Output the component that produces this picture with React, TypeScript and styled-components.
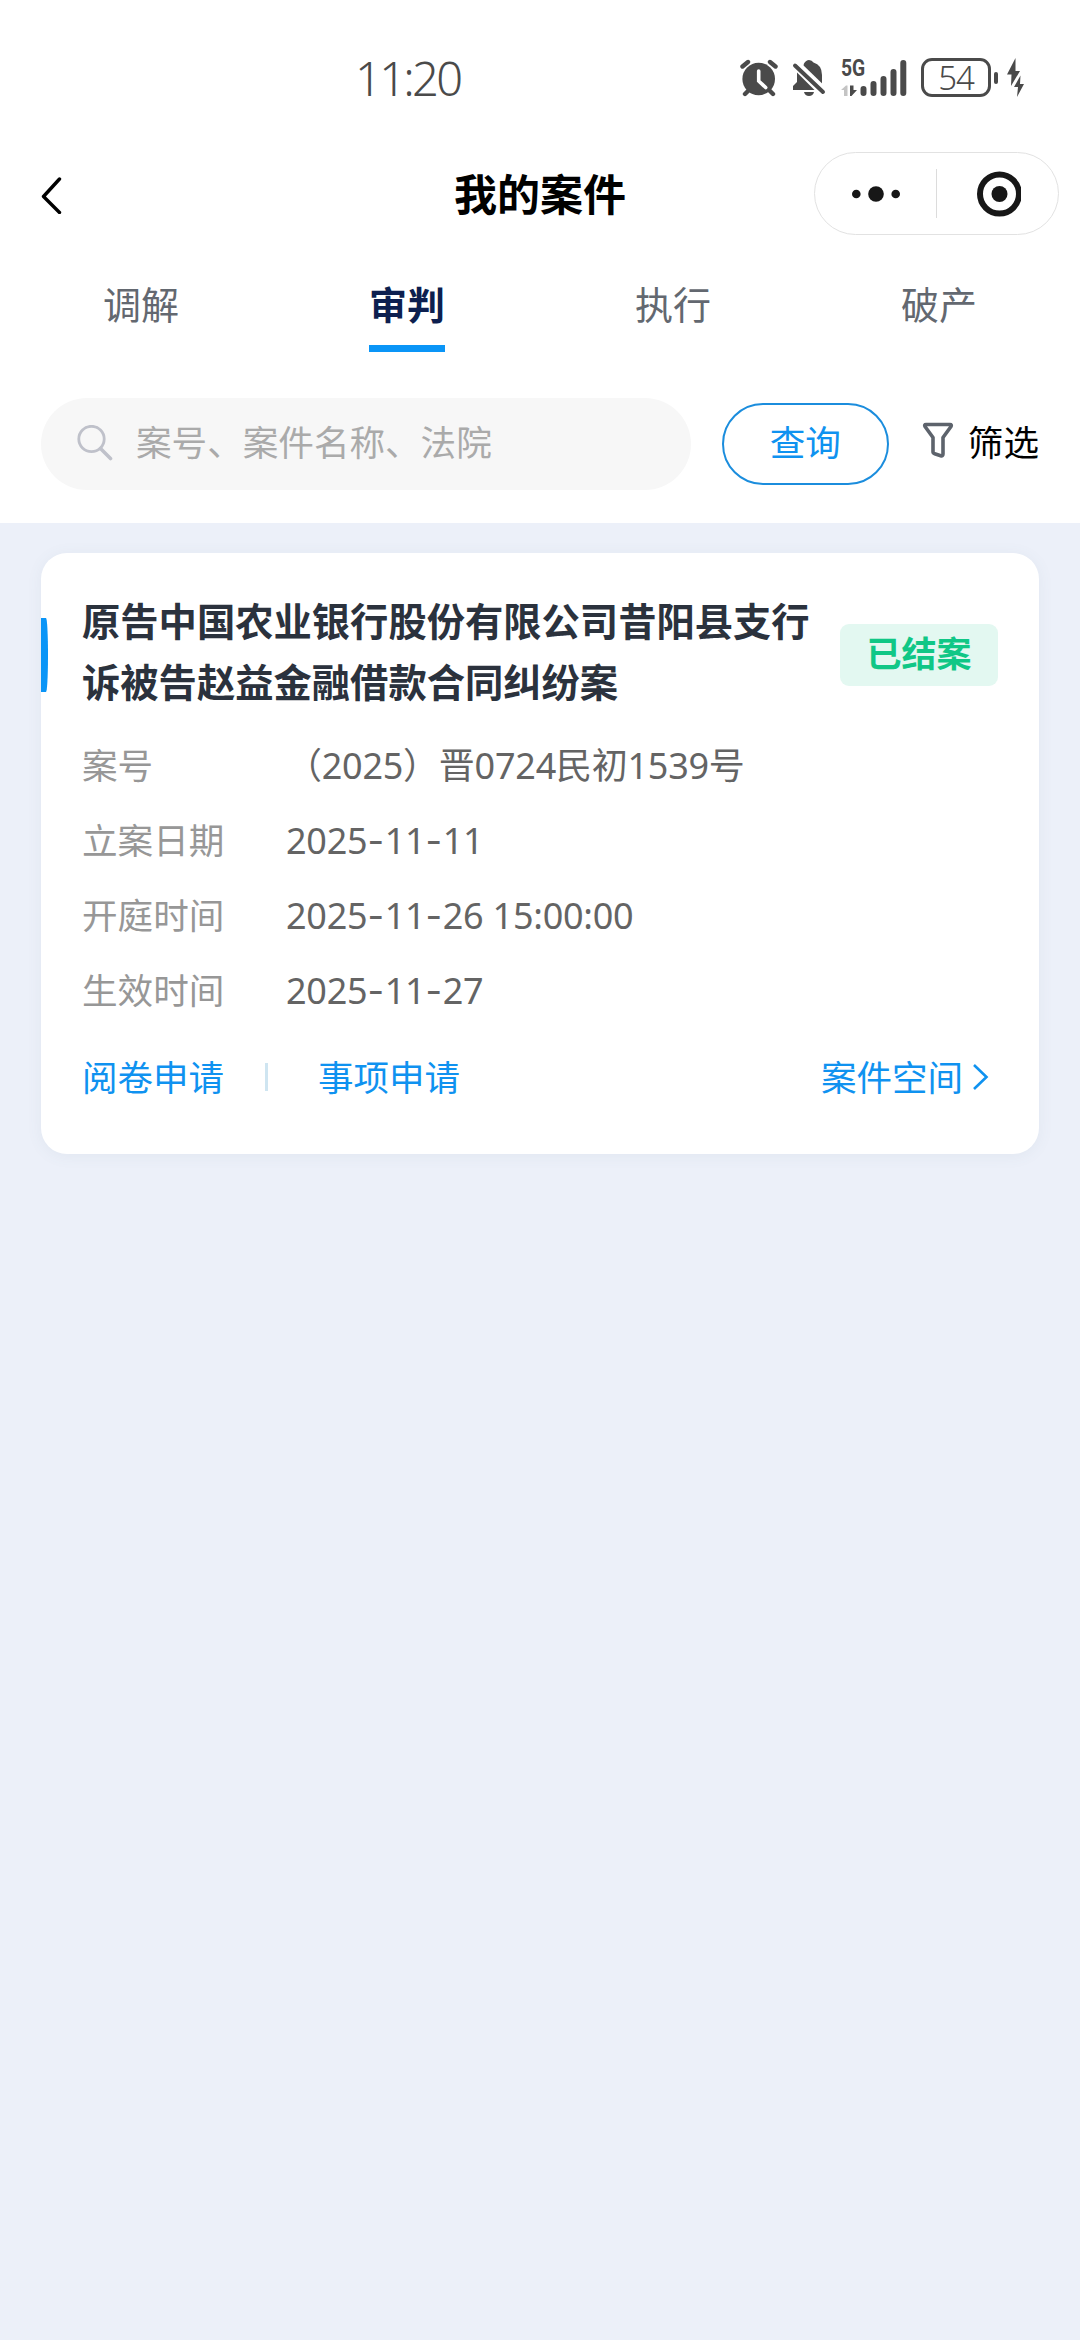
import React from "react";
import styled, { createGlobalStyle } from "styled-components";

const GlobalStyle = createGlobalStyle`
  * { box-sizing: border-box; }
  html, body { margin: 0; padding: 0; background: #ecf0f9; }
  body { font-family: "Noto Sans", "Noto Sans CJK SC", sans-serif; }
  svg { display: block; flex: none; }
`;

const Page = styled.div`
  width: 1080px;
  min-height: 2340px;
  display: flex;
  flex-direction: column;
  background: #ecf0f9;
`;

const Header = styled.header`
  height: 523px;
  background: #fff;
  display: flex;
  flex-direction: column;
`;

const StatusBar = styled.div`
  height: 152px;
  padding: 58px 56px 0 355px;
  display: flex;
  justify-content: space-between;
  align-items: flex-start;
  color: #4a4a4a;
`;

const Clock = styled.span`
  font-size: 47px;
  font-weight: 300;
  line-height: 40px;
  letter-spacing: -2.7px;
`;

const StatusIcons = styled.div`
  display: flex;
  height: 40px;
`;

const Network = styled.div`
  width: 66px;
  height: 40px;
  margin: 0 14px 0 15px;
  position: relative;
`;

const NetworkLabel = styled.span`
  position: absolute;
  left: 0;
  top: 1px;
  font-family: Roboto, sans-serif;
  font-weight: 700;
  font-size: 23px;
  line-height: 20px;
  transform: scaleX(0.84);
  transform-origin: left;
`;

const Battery = styled.div`
  width: 70px;
  height: 39px;
  border: 3px solid #4a4a4a;
  border-radius: 11px;
  font-size: 33px;
  font-weight: 300;
  line-height: 33px;
  letter-spacing: -1px;
  text-align: center;
`;

const BatteryTip = styled.div`
  width: 4px;
  height: 12px;
  margin: 14px 9px 0 3px;
  border-radius: 2px;
  background: #4a4a4a;
`;

const NavBar = styled.div`
  height: 82px;
  padding: 0 21px 0 40px;
  display: grid;
  grid-template-columns: 245px 1fr 245px;
  align-items: center;
`;

const NavTitle = styled.h1`
  margin: 2px 0 0 -19px;
  font-size: 43px;
  font-weight: 700;
  line-height: 60px;
  text-align: center;
  color: #000;
`;

const Capsule = styled.div`
  height: 83px;
  border: 1px solid #e2e2e2;
  border-radius: 42px;
  display: flex;
  align-items: center;
`;

const CapsuleHalf = styled.div`
  flex: 1;
  display: flex;
  justify-content: center;
`;

const CapsuleLine = styled.div`
  width: 1px;
  height: 49px;
  background: #dcdcdc;
`;

const Tabs = styled.nav`
  height: 118px;
  margin-top: 46px;
  padding: 0 8px;
  display: grid;
  grid-template-columns: repeat(4, 1fr);
  justify-items: center;
`;

const Tab = styled.a<{ $active?: boolean }>`
  height: 72px;
  font-size: 38px;
  line-height: 49px;
  font-weight: ${(p) => (p.$active ? 700 : 400)};
  color: ${(p) => (p.$active ? "#0d1f4f" : "#636870")};
  border-bottom: 7px solid ${(p) => (p.$active ? "#0a95f7" : "transparent")};
`;

const SearchRow = styled.div`
  padding: 0 41px;
  height: 92px;
  display: flex;
  align-items: center;
`;

const SearchField = styled.div`
  width: 650px;
  height: 92px;
  padding: 0 0 2px 36px;
  border-radius: 46px;
  background: #f7f7f7;
  display: flex;
  align-items: center;
  gap: 23px;
`;

const Placeholder = styled.span`
  font-size: 35.6px;
  line-height: 50px;
  padding-bottom: 2px;
  color: #aaa;
`;

const QueryButton = styled.button`
  width: 167px;
  height: 82px;
  margin: 0 33px 0 31px;
  padding: 0 0 5px;
  border: 2px solid #1b8ddd;
  border-radius: 41px;
  background: #fff;
  color: #0f92f0;
  font-family: inherit;
  font-size: 35.6px;
  line-height: 50px;
`;

const Filter = styled.div`
  display: flex;
  align-items: center;
  gap: 14px;
  padding-bottom: 5px;
  font-size: 35.6px;
  line-height: 50px;
  color: #000;
  white-space: nowrap;
`;

const Card = styled.article`
  margin: 30px 41px 0;
  height: 601px;
  border-radius: 26px;
  background: #fff;
  box-shadow: 0 2px 16px rgba(90, 110, 130, 0.07);
`;

const CardHead = styled.div`
  padding-top: 38px;
  display: flex;
  align-items: center;
`;

const Accent = styled.div`
  width: 7px;
  height: 74px;
  margin: 6px 34px 0 0;
  background: #0a95f7;
  border-radius: 0 2px 2px 0 / 0 37px 37px 0;
`;

const CaseTitle = styled.h2`
  margin: 0;
  width: 740px;
  font-size: 38.3px;
  line-height: 61px;
  font-weight: 700;
  color: #2b323d;
`;

const Badge = styled.span`
  width: 158px;
  height: 62px;
  margin: 6px 0 0 18px;
  border-radius: 9px;
  background: #e3f8f1;
  color: #10c786;
  font-size: 35px;
  font-weight: 700;
  line-height: 59px;
  text-align: center;
`;

const Fields = styled.dl`
  margin: 15px 0 0 41px;
  display: grid;
  grid-template-columns: 204px 1fr;
  grid-auto-rows: 75px;
  align-items: center;
`;

const Label = styled.dt`
  font-size: 35.6px;
  line-height: 50px;
  padding-bottom: 2px;
  color: #979797;
`;

const Value = styled.dd`
  margin: 0;
  font-size: 36px;
  line-height: 50px;
  letter-spacing: -0.25px;
  color: #646464;
`;

const Dash = styled.span`
  font-family: Inter, sans-serif;
  letter-spacing: 0.8px;
`;

const CardActions = styled.div`
  height: 50px;
  margin-top: 24px;
  padding: 0 49px 0 41px;
  display: flex;
  align-items: center;
`;

const ActionLink = styled.a`
  font-size: 35.5px;
  line-height: 50px;
  color: #0f92f0;
  display: flex;
  align-items: center;
  gap: 9px;

  &:last-child {
    margin-left: auto;
  }
`;

const ActionLine = styled.div`
  width: 3px;
  height: 28px;
  margin: 0 50px 0 41px;
  background: #cfe5f1;
`;

const fields = [
  ["案号", "（2025）晋0724民初1539号"],
  ["立案日期", "2025-11-11"],
  ["开庭时间", "2025-11-26 15:00:00"],
  ["生效时间", "2025-11-27"],
];

const withDashes = (text: string) =>
  text.split("-").map((part, i) => (
    <React.Fragment key={i}>
      {i > 0 && <Dash>-</Dash>}
      {part}
    </React.Fragment>
  ));

const AlarmIcon = () => (
  <svg width="38" height="40" viewBox="0 0 38 40">
    <g stroke="#4a4a4a" strokeWidth="4.4" strokeLinecap="round">
      <path d="M2.5 8.5 8 4M35.5 8.5 30 4M9 32l-4 4M29 32l4 4" />
    </g>
    <circle cx="18.7" cy="21" r="16.3" fill="#4a4a4a" />
    <path d="M18.7 13v10l7 6.5" fill="none" stroke="#fff" strokeWidth="3.6" strokeLinecap="round" />
  </svg>
);

const MutedBellIcon = () => (
  <svg width="34" height="40" viewBox="0 0 34 40" style={{ marginLeft: 14 }}>
    <g fill="#4a4a4a">
      <path d="M12 5.5Q14 2 17 2q3 0 4.500 2.500Q30 7 30 17v10.500L11 9z" />
      <path d="M5 14.500 22.500 32H1v-4l4-4z" />
      <path d="M12 34h10q-1 4-5 4t-5-4z" />
    </g>
    <path d="M5 4 33 31" stroke="#fff" strokeWidth="4" />
    <path d="M3 7.500 31 34" stroke="#4a4a4a" strokeWidth="4" strokeLinecap="round" />
  </svg>
);

const SignalIcon = () => (
  <svg width="66" height="40" viewBox="0 0 66 40">
    <g stroke="#4a4a4a" strokeWidth="6" strokeLinecap="round">
      <path d="M22.500 31v4M32.500 26v9M42.500 21v14M52.500 14v21M62.300 5v30" />
    </g>
    <path d="M0 32 5 27.500h1.500V38H3v-6z" fill="#c4c4c4" />
    <path d="M9 27.500h3.500V32H16l-5.500 6H9z" fill="#4a4a4a" />
  </svg>
);

const BoltIcon = () => (
  <svg width="17" height="40" viewBox="0 0 17 40" fill="#4a4a4a">
    <path d="M8.500 0 0 16.500h4.500L4 28l9-15H8.500z" />
    <path d="M13.500 17.500 7 29h4l-1 10 7-13h-4z" />
  </svg>
);

export default function App() {
  return (
    <Page lang="zh-CN">
      <GlobalStyle />
      <Header>
        <StatusBar>
          <Clock>11:20</Clock>
          <StatusIcons>
            <AlarmIcon />
            <MutedBellIcon />
            <Network>
              <NetworkLabel>5G</NetworkLabel>
              <SignalIcon />
            </Network>
            <Battery>54</Battery>
            <BatteryTip />
            <BoltIcon />
          </StatusIcons>
        </StatusBar>

        <NavBar>
          <svg width="24" height="40" viewBox="0 0 24 40" fill="none">
            <path
              d="M19.500 5 3.500 22.500l16 16"
              stroke="#000"
              strokeWidth="3.400"
              strokeLinecap="round"
              strokeLinejoin="round"
            />
          </svg>
          <NavTitle>我的案件</NavTitle>
          <Capsule>
            <CapsuleHalf>
              <svg width="50" height="16" viewBox="0 0 50 16" fill="#171717">
                <circle cx="5.300" cy="8" r="4.300" />
                <circle cx="25" cy="8" r="7.800" />
                <circle cx="44.700" cy="8" r="4.300" />
              </svg>
            </CapsuleHalf>
            <CapsuleLine />
            <CapsuleHalf>
              <svg width="46" height="46" viewBox="0 0 46 46">
                <circle cx="24.500" cy="23" r="19.500" fill="none" stroke="#171717" strokeWidth="6" />
                <circle cx="24.500" cy="23" r="8" fill="#171717" />
              </svg>
            </CapsuleHalf>
          </Capsule>
        </NavBar>

        <Tabs>
          <Tab>调解</Tab>
          <Tab $active>审判</Tab>
          <Tab>执行</Tab>
          <Tab>破产</Tab>
        </Tabs>

        <SearchRow>
          <SearchField>
            <svg width="36" height="36" viewBox="0 0 36 36" fill="none" stroke="#bfc1ca">
              <circle cx="14.500" cy="14" r="12.700" strokeWidth="2.800" />
              <path d="m23.500 23.500 10 10" strokeWidth="3.600" strokeLinecap="round" />
            </svg>
            <Placeholder>案号、案件名称、法院</Placeholder>
          </SearchField>
          <QueryButton>查询</QueryButton>
          <Filter>
            <svg width="32" height="42" viewBox="0 0 32 42" fill="none">
              <path
                d="M4 3.500h24q2 0 1 2L21 16.500V33q0 2.500-2.300 1.800l-6-2q-1.700-.6-1.700-2V16.500L3 5.500q-1-2 1-2z"
                stroke="#5d636c"
                strokeWidth="3.600"
                strokeLinejoin="round"
              />
            </svg>
            筛选
          </Filter>
        </SearchRow>
      </Header>

      <Card>
        <CardHead>
          <Accent />
          <CaseTitle>原告中国农业银行股份有限公司昔阳县支行诉被告赵益金融借款合同纠纷案</CaseTitle>
          <Badge>已结案</Badge>
        </CardHead>
        <Fields>
          {fields.map(([label, value]) => (
            <React.Fragment key={label}>
              <Label>{label}</Label>
              <Value>{withDashes(value)}</Value>
            </React.Fragment>
          ))}
        </Fields>
        <CardActions>
          <ActionLink>阅卷申请</ActionLink>
          <ActionLine />
          <ActionLink>事项申请</ActionLink>
          <ActionLink>
            案件空间
            <svg width="18" height="30" viewBox="0 0 18 30" fill="none">
              <path d="m2 3 12.500 12L2 27" stroke="#0f92f0" strokeWidth="2.600" />
            </svg>
          </ActionLink>
        </CardActions>
      </Card>
    </Page>
  );
}
